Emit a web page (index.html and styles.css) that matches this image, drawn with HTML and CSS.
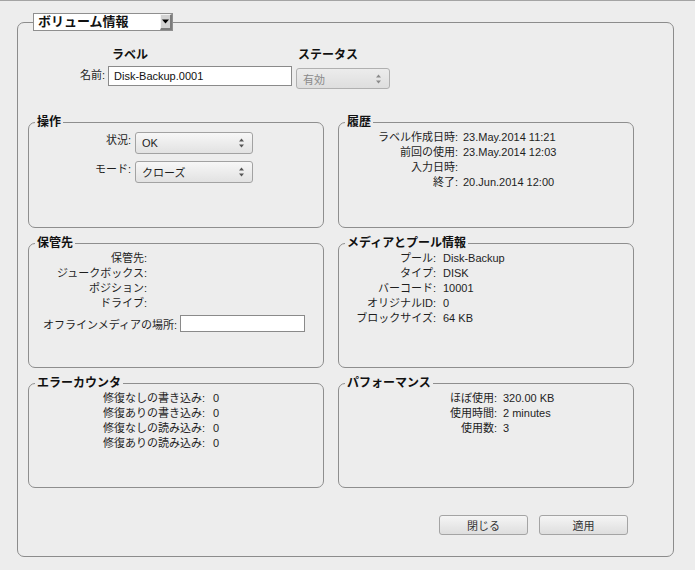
FILE: index.html
```html
<!DOCTYPE html>
<html lang="ja">
<head>
<meta charset="utf-8">
<title>ボリューム情報</title>
<link rel="stylesheet" href="styles.css">
</head>
<body>
<fieldset class="frame">
  <legend class="frame-legend">
    <span class="combo">
      <span class="combo-text">ボリューム情報</span>
      <span class="combo-btn"><svg width="7" height="5" viewBox="0 0 7 5"><path d="M0 0.5H7L3.5 4.5Z" fill="#000"/></svg></span>
    </span>
  </legend>
  <div class="frame-body">
    <div class="ident">
      <span></span>
      <span class="col-head label-head">ラベル</span>
      <span class="col-head status-head">ステータス</span>
      <span class="lbl name-lbl">名前:</span>
      <div class="textbox name-box">Disk-Backup.0001</div>
      <div class="select status-select disabled"><span>有効</span><svg class="spin" width="7" height="12" viewBox="0 0 7 12"><path d="M1 4.5H6L3.5 1.5Z" fill="#8a8a8a"/><path d="M1 7.5H6L3.5 10.5Z" fill="#8a8a8a"/></svg></div>
    </div>

    <div class="groups">
      <fieldset class="group">
        <legend class="group-title">操作</legend>
        <div class="form op-form">
          <span class="lbl">状況:</span>
          <div class="select"><span>OK</span><svg class="spin" width="7" height="12" viewBox="0 0 7 12"><path d="M1 4.5H6L3.5 1.5Z" fill="#555"/><path d="M1 7.5H6L3.5 10.5Z" fill="#555"/></svg></div>
          <span class="lbl">モード:</span>
          <div class="select"><span>クローズ</span><svg class="spin" width="7" height="12" viewBox="0 0 7 12"><path d="M1 4.5H6L3.5 1.5Z" fill="#555"/><path d="M1 7.5H6L3.5 10.5Z" fill="#555"/></svg></div>
        </div>
      </fieldset>

      <fieldset class="group">
        <legend class="group-title">履歴</legend>
        <div class="kv kv-hist">
          <span class="lbl">ラベル作成日時:</span><span class="val">23.May.2014 11:21</span>
          <span class="lbl">前回の使用:</span><span class="val">23.May.2014 12:03</span>
          <span class="lbl">入力日時:</span><span class="val"></span>
          <span class="lbl">終了:</span><span class="val">20.Jun.2014 12:00</span>
        </div>
      </fieldset>

      <fieldset class="group">
        <legend class="group-title">保管先</legend>
        <div class="kv kv-store">
          <span class="lbl">保管先:</span><span class="val"></span>
          <span class="lbl">ジュークボックス:</span><span class="val"></span>
          <span class="lbl">ポジション:</span><span class="val"></span>
          <span class="lbl">ドライブ:</span><span class="val"></span>
        </div>
        <div class="offline">
          <span class="lbl">オフラインメディアの場所:</span>
          <div class="textbox offline-box"></div>
        </div>
      </fieldset>

      <fieldset class="group">
        <legend class="group-title">メディアとプール情報</legend>
        <div class="kv kv-media">
          <span class="lbl">プール:</span><span class="val">Disk-Backup</span>
          <span class="lbl">タイプ:</span><span class="val">DISK</span>
          <span class="lbl">バーコード:</span><span class="val">10001</span>
          <span class="lbl">オリジナルID:</span><span class="val">0</span>
          <span class="lbl">ブロックサイズ:</span><span class="val">64 KB</span>
        </div>
      </fieldset>

      <fieldset class="group">
        <legend class="group-title">エラーカウンタ</legend>
        <div class="kv kv-err">
          <span class="lbl">修復なしの書き込み:</span><span class="val">0</span>
          <span class="lbl">修復ありの書き込み:</span><span class="val">0</span>
          <span class="lbl">修復なしの読み込み:</span><span class="val">0</span>
          <span class="lbl">修復ありの読み込み:</span><span class="val">0</span>
        </div>
      </fieldset>

      <fieldset class="group">
        <legend class="group-title">パフォーマンス</legend>
        <div class="kv kv-perf">
          <span class="lbl">ほぼ使用:</span><span class="val">320.00 KB</span>
          <span class="lbl">使用時間:</span><span class="val">2 minutes</span>
          <span class="lbl">使用数:</span><span class="val">3</span>
        </div>
      </fieldset>
    </div>

    <div class="actions">
      <button class="btn">閉じる</button>
      <button class="btn">適用</button>
    </div>
  </div>
</fieldset>
</body>
</html>
```

FILE: styles.css
```css
* { box-sizing: border-box; }

html, body {
  margin: 0;
  padding: 0;
}

body {
  background: #ededed;
  border-top: 1px solid #a4a4a4;
  height: 570px;
  overflow: hidden;
  font-family: "Liberation Sans", "Noto Sans CJK JP", sans-serif;
  font-size: 11px;
  color: #1e1e1e;
}

.frame {
  margin: 12px 0 0 17px;
  width: 657px;
  height: 544px;
  padding: 0;
  border: 1px solid #8c8c8c;
  border-radius: 7px;
  min-width: 0;
}

.frame-legend {
  margin-left: 15px;
  padding: 0;
}

.combo {
  display: flex;
  width: 140px;
  height: 18px;
  border: 1px solid #8f8f8f;
  background: #fff;
}

.combo-text {
  flex: 1;
  padding-left: 4px;
  font-size: 13px;
  font-weight: bold;
  line-height: 16px;
  color: #111;
}

.combo-btn {
  width: 12px;
  height: 16px;
  display: flex;
  align-items: center;
  justify-content: center;
  background: #d2d2d2;
  border-top: 1px solid #f4f4f4;
  border-left: 1px solid #f4f4f4;
  border-right: 2px solid #7c7c7c;
  border-bottom: 2px solid #7c7c7c;
}

.frame-body {
  padding: 0 39px 0 10px;
}

/* name / status */
.ident {
  margin-top: 16px;
  display: grid;
  grid-template-columns: 77px 184px 95px;
  grid-template-rows: 16px 23px;
  column-gap: 3px;
  row-gap: 3px;
}

.col-head {
  font-size: 12px;
  font-weight: bold;
  line-height: 16px;
  color: #111;
}

.label-head { padding-left: 4px; }
.status-head { padding-left: 2px; margin-left: 1px; }

.lbl {
  text-align: right;
  white-space: nowrap;
}

.name-lbl {
  line-height: 18px;
}

.textbox {
  background: #fff;
  border: 1px solid #8a8a8a;
}

.name-box {
  height: 20px;
  line-height: 18px;
  padding-left: 5px;
  font-size: 11px;
  color: #111;
}

.select {
  display: flex;
  align-items: center;
  justify-content: space-between;
  height: 22px;
  padding: 0 7px 0 6px;
  border: 1px solid #a2a2a2;
  border-radius: 3px;
  background: linear-gradient(#f7f7f7, #e2e2e2);
  color: #1e1e1e;
}

.status-select {
  margin-top: 2px;
  margin-left: 1px;
  height: 21px;
}

.select.disabled {
  color: #8a8a8a;
  background: linear-gradient(#ececec, #dedede);
  border-color: #b0b0b0;
}

/* group boxes */
.groups {
  margin-top: 26px;
  display: grid;
  grid-template-columns: 296px 296px;
  grid-template-rows: 113px 132px 112px;
  column-gap: 14px;
  row-gap: 8px;
}

.group {
  margin: 0;
  padding: 0;
  min-width: 0;
  border: 1px solid #8e8e8e;
  border-radius: 7px;
}

.group-title {
  margin-left: 6px;
  padding: 0 2px;
  font-size: 12px;
  font-weight: bold;
  line-height: 15px;
  color: #111;
}

.form {
  display: grid;
  column-gap: 4px;
  row-gap: 7px;
}

.op-form {
  padding-top: 2px;
  grid-template-columns: 102px 118px;
}

.op-form .lbl {
  line-height: 16px;
}

.kv {
  display: grid;
  line-height: 15px;
}

.kv-hist  { grid-template-columns: 119px auto; column-gap: 5px; }
.kv-store { grid-template-columns: 118px auto; column-gap: 5px; }
.kv-media { grid-template-columns: 97px auto; column-gap: 7px; }
.kv-err   { grid-template-columns: 176px auto; column-gap: 8px; }
.kv-perf  { grid-template-columns: 158px auto; column-gap: 6px; }

.val {
  white-space: nowrap;
}

.offline {
  margin-top: 4px;
  padding-left: 14px;
  display: flex;
  align-items: center;
  gap: 3px;
}

.offline-box {
  width: 125px;
  height: 17px;
}

/* buttons */
.actions {
  margin-top: 27px;
  padding-right: 6px;
  display: flex;
  justify-content: flex-end;
  gap: 11px;
}

.btn {
  width: 89px;
  height: 20px;
  padding: 0;
  font-family: "Liberation Sans", "Noto Sans CJK JP", sans-serif;
  font-size: 11px;
  color: #333;
  border: 1px solid #a4a4a4;
  border-radius: 3px;
  background: linear-gradient(#f5f5f5, #dedede);
}
```
